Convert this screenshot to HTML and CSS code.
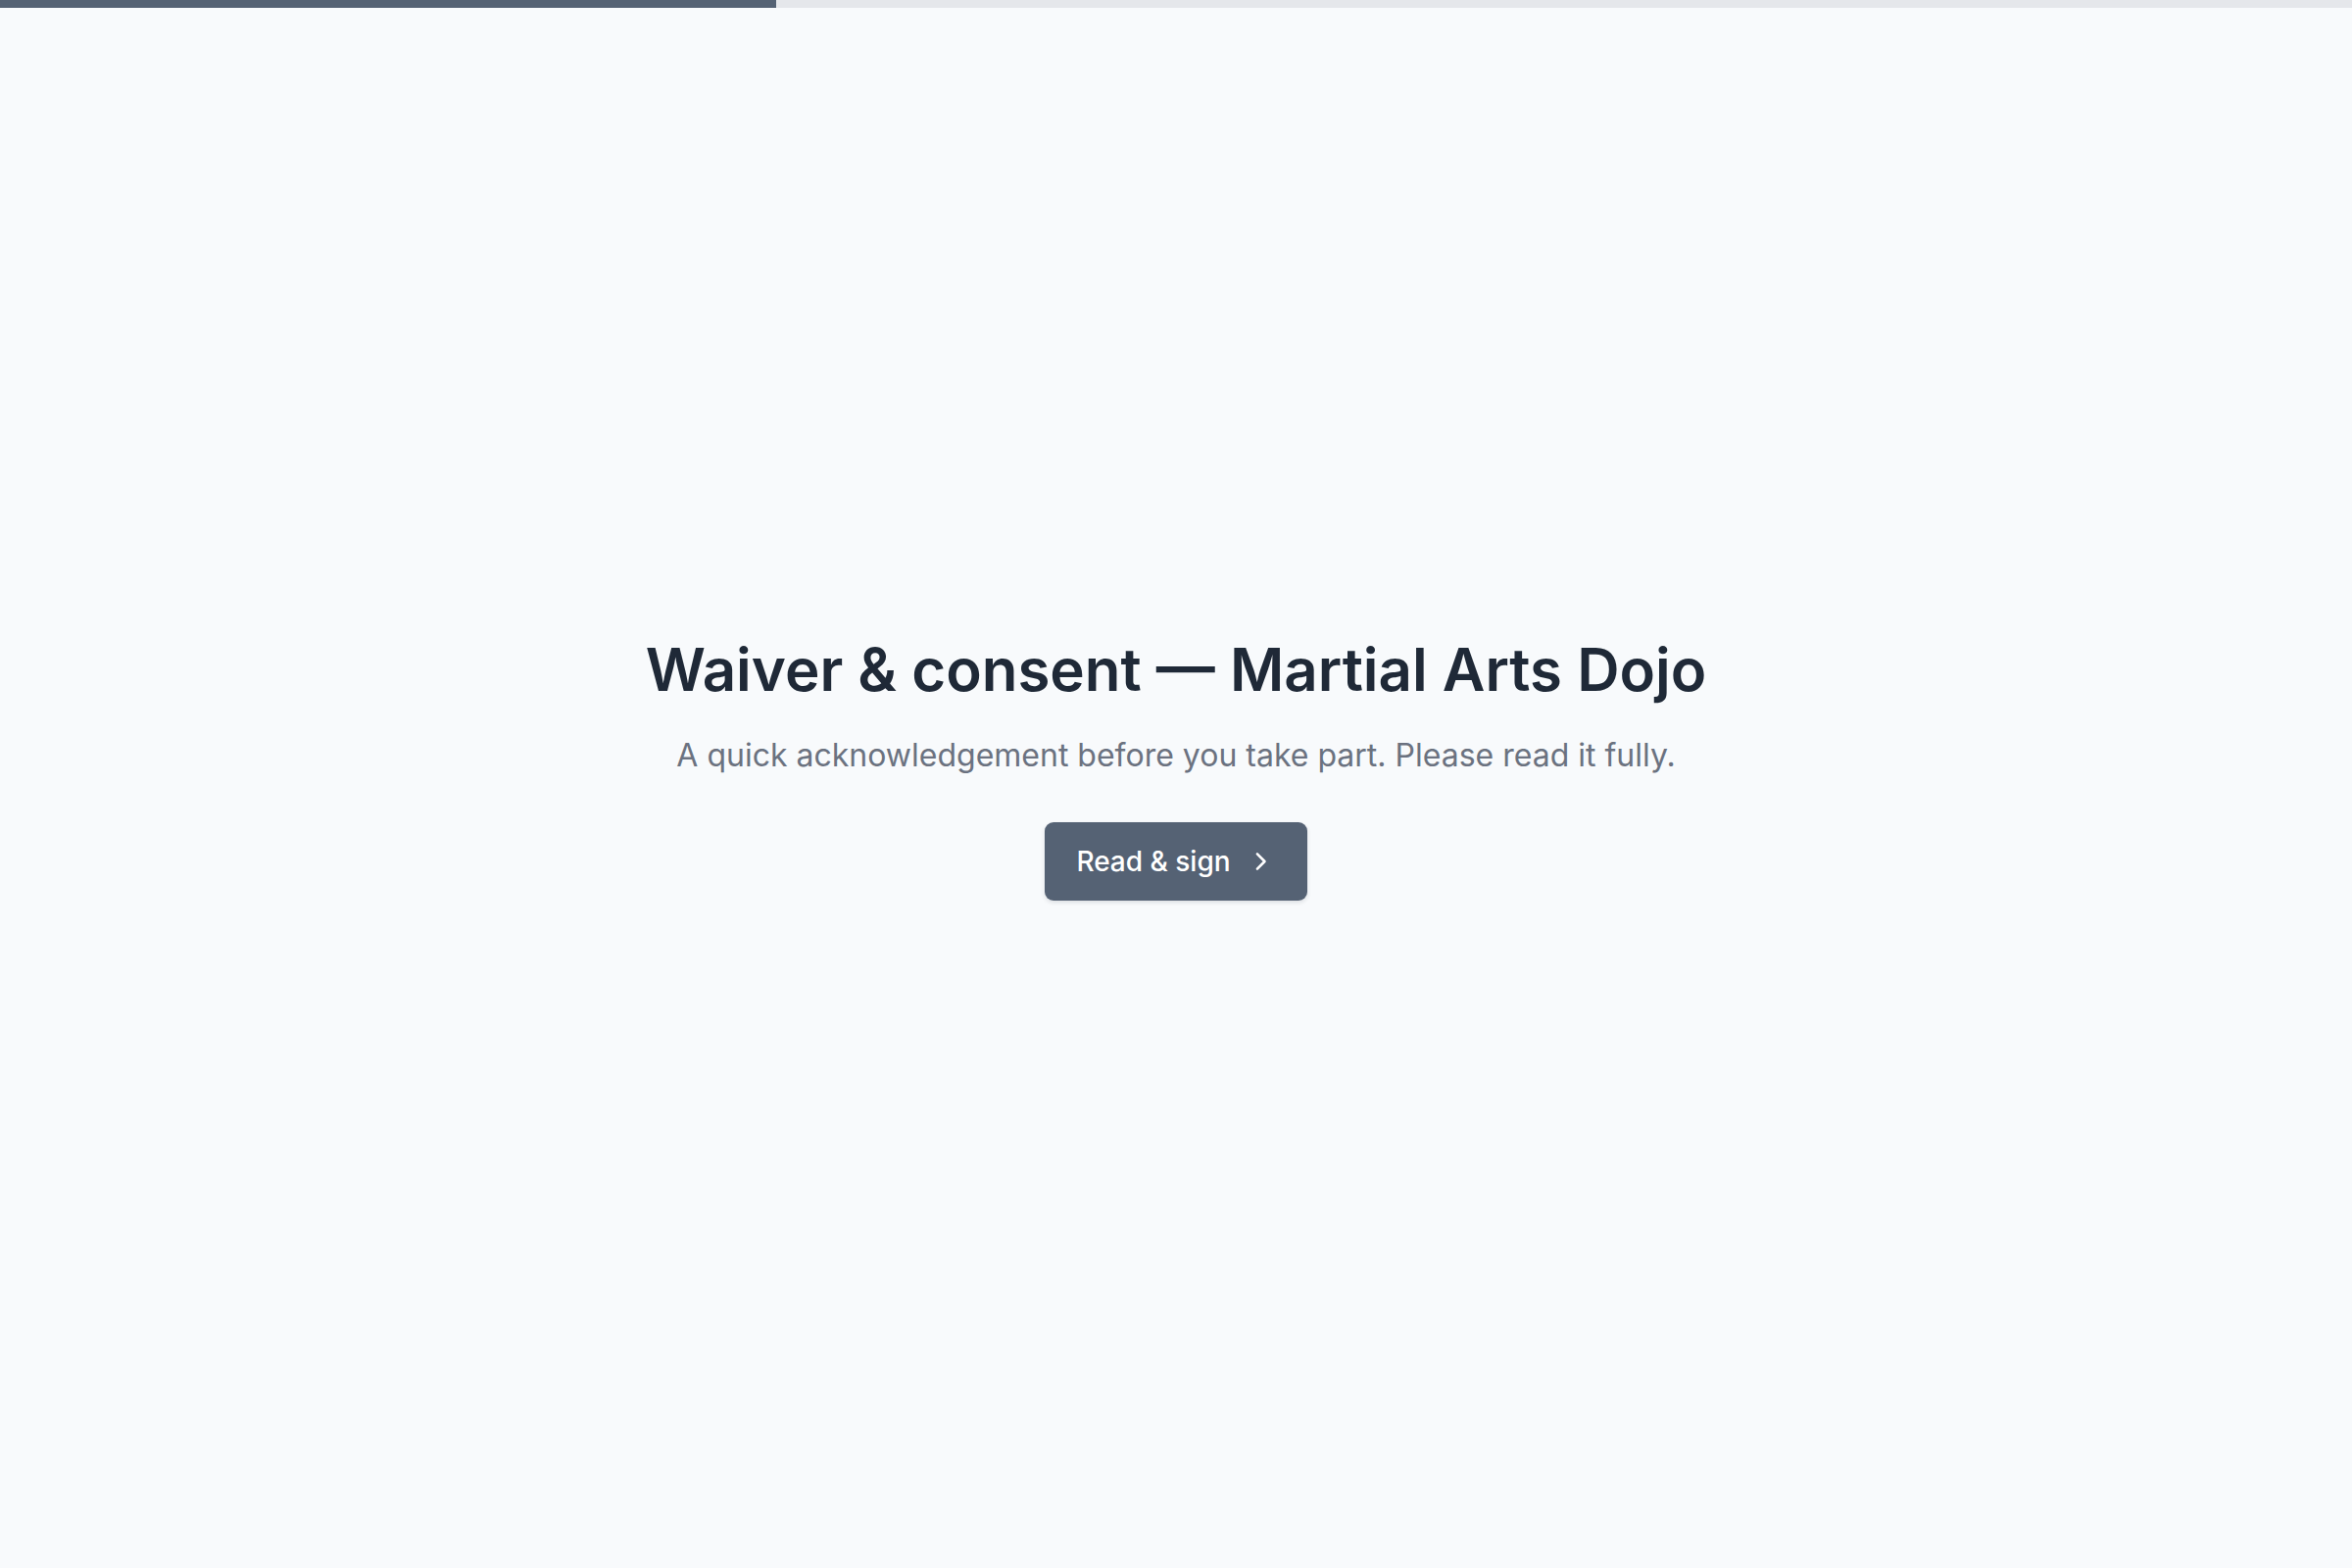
FILE: index.html
```html
<!DOCTYPE html>
<html lang="en">
<head>
  <meta charset="UTF-8" />
  <meta name="viewport" content="width=device-width, initial-scale=1.0"/>
  <title>Waiver &amp; consent</title>
  <link rel="stylesheet" href="styles.css">
</head>
<body>

  <div class="progress">
    <div class="progress-fill" style="width: 33%"></div>
  </div>

  <main class="intro">
    <h1>Waiver &amp; consent — Martial Arts Dojo</h1>
    <p>A quick acknowledgement before you take part. Please read it fully.</p>
    <button class="start-btn">
      Read &amp; sign
      <svg viewBox="0 0 24 24" fill="none" stroke="currentColor" stroke-width="2.2" stroke-linecap="round" stroke-linejoin="round">
        <path d="M8.5 5.5l6.5 6.5-6.5 6.5"/>
      </svg>
    </button>
  </main>

</body>
</html>
```

FILE: styles.css
```css
body {
  margin: 0;
  font-family: Inter, "Noto Sans", sans-serif;
  background: #f8fafc;
  color: #1f2937;
  min-height: 100vh;
  display: flex;
  flex-direction: column;
}

.progress {
  height: 8px;
  background: #e5e7eb;
}

.progress-fill {
  height: 100%;
  background: #556274;
}

.intro {
  flex: 1;
  display: flex;
  flex-direction: column;
  align-items: center;
  justify-content: center;
  text-align: center;
  padding-bottom: 43px;
}

.intro h1 {
  margin: 0;
  font-size: 60px;
  font-weight: 600;
  line-height: 1.2;
  color: #1f2937;
}

.intro p {
  margin: 28px 0 0;
  font-size: 32px;
  line-height: 1.5;
  color: #6b7280;
}

.start-btn {
  margin-top: 44px;
  display: inline-flex;
  align-items: center;
  gap: 17px;
  padding: 0 33px 0 32px;
  height: 80px;
  border: none;
  border-radius: 9px;
  background: #556274;
  color: #fff;
  font-family: inherit;
  font-size: 28px;
  font-weight: 500;
  box-shadow: 0 2px 4px rgba(15, 23, 42, 0.12);
  cursor: pointer;
}

.start-btn svg {
  width: 28px;
  height: 28px;
}
```
